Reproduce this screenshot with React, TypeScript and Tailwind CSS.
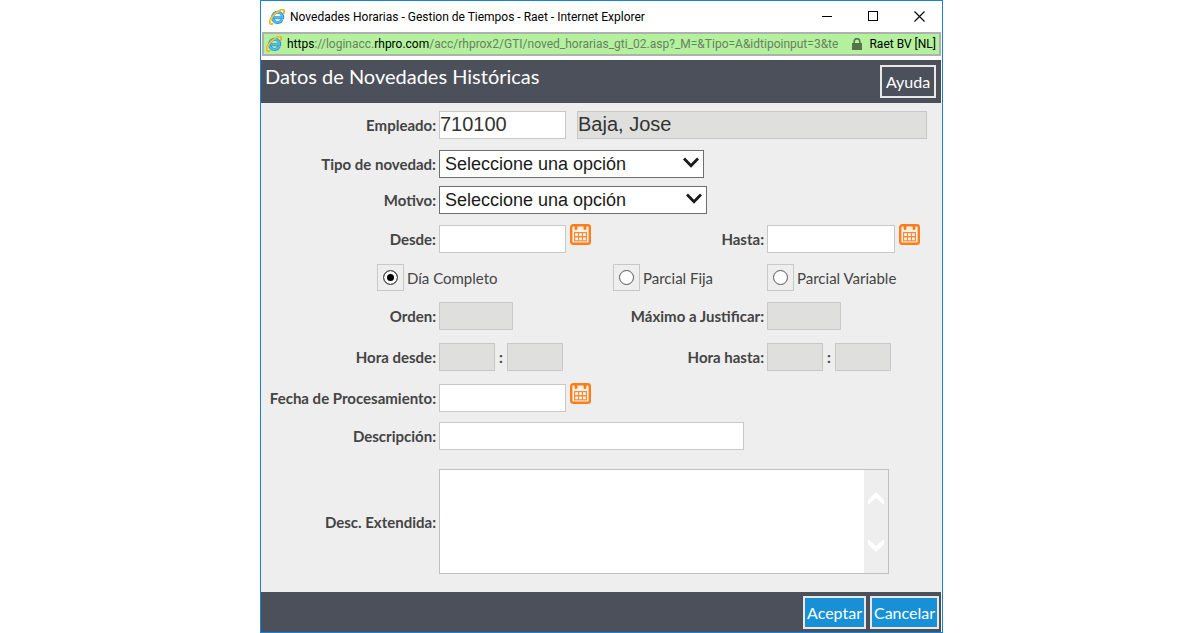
import { useState } from "react"
import type { ReactNode } from "react"
import clsx from "clsx"

const radioOptions = [
    { id: "completo", text: "Día Completo", cell: "col-span-2 pl-[116px]" },
    { id: "fija", text: "Parcial Fija", cell: "" },
    { id: "variable", text: "Parcial Variable", cell: "" },
]

function ExplorerIcon() {
    return (
        <svg viewBox="0 0 16 16" className="size-4 shrink-0" aria-hidden="true">
            <path d="M13.2 10.6 A5.1 5.1 0 1 1 13.7 8.8 H5.2" fill="none" stroke="#2b8fd2" strokeWidth="3" />
            <path d="M13 10.6 A5 5 0 1 1 13.5 8.6 H5.2" fill="none" stroke="#5cbdf0" strokeWidth="1.6" />
            <path
                d="M3.4 14.9 C-0.6 15.8 0 11 4.2 6.4 C8.2 2 13.4 -0.6 14.8 1.1 C15.5 2 15.2 3.2 14.8 4.2"
                fill="none"
                stroke="#e8ae1c"
                strokeWidth="1.8"
                strokeLinecap="round"
            />
            <path
                d="M2.4 14.6 C-0.2 14.4 1.2 10.2 4.6 6.4 C8.4 2.2 13.2 -0.2 14.4 1.4"
                fill="none"
                stroke="#fbd84e"
                strokeWidth="0.9"
            />
        </svg>
    )
}

function CalendarButton({ label }: { label: string }) {
    return (
        <button type="button" aria-label={label} className="ml-1 -mt-2.5 shrink-0">
            <svg viewBox="0 0 21 21" className="block size-[21px]">
                <rect x="1.2" y="1.2" width="18.6" height="18.6" rx="2" fill="#fff1e6" stroke="#ff7d1a" strokeWidth="2.4" />
                <path d="M5 1 H7 V5.4 H5 Z M14 1 H16 V5.4 H14 Z" fill="#ff7d1a" stroke="#ff7d1a" strokeWidth="0.8" />
                <path d="M4 8 H17 V17.4 H4 Z" fill="#ff8a33" />
                <path
                    d="M5.2 9.2 h2.8 v2.8 h-2.8 Z M9.1 9.2 h2.8 v2.8 h-2.8 Z M13 9.2 h2.8 v2.8 h-2.8 Z M5.2 13.4 h2.8 v2.8 h-2.8 Z M9.1 13.4 h2.8 v2.8 h-2.8 Z M13 13.4 h2.8 v2.8 h-2.8 Z"
                    fill="#fff8f2"
                />
            </svg>
        </button>
    )
}

function Row({ className, children }: { className?: string; children: ReactNode }) {
    return <div className={clsx("grid grid-cols-[178px_174px_154px_1fr] items-center", className)}>{children}</div>
}

function Label({ htmlFor, className, children }: { htmlFor: string; className?: string; children: ReactNode }) {
    return (
        <label htmlFor={htmlFor} className={clsx("pr-[3px] text-right text-[15px] leading-5 font-bold whitespace-nowrap", className)}>
            {children}
        </label>
    )
}

interface TextBoxProps {
    id: string
    className: string
    value?: string
    disabled?: boolean
    label?: string
}

function TextBox({ id, className, value, disabled, label }: TextBoxProps) {
    return (
        <input
            id={id}
            type="text"
            defaultValue={value}
            disabled={disabled}
            aria-label={label}
            className={clsx(
                "h-7 shrink-0 border border-[#c8c8c8] bg-white pb-0.5 font-['Liberation_Sans',sans-serif] text-xl leading-6 text-[#333] disabled:bg-[#dfdfde]",
                className,
            )}
        />
    )
}

function SelectBox({ id, className }: { id: string; className: string }) {
    return (
        <div className={clsx("relative", className)}>
            <select
                id={id}
                className="block h-7 w-full appearance-none border border-[#6e6e6e] bg-white px-[5px] font-['Liberation_Sans',sans-serif] text-lg leading-6 text-[#1a1a1a]"
            >
                <option>Seleccione una opción</option>
            </select>
            <svg viewBox="0 0 16 12" className="pointer-events-none absolute top-[7px] right-[5px] h-3 w-4" aria-hidden="true">
                <path d="M1 1.5 L8 8.7 L15 1.5" fill="none" stroke="#1a1a1a" strokeWidth="2.8" />
            </svg>
        </div>
    )
}

function TimeFields({ id, label }: { id: string; label: string }) {
    return (
        <div className="flex items-center">
            <TextBox id={id} className="w-14" disabled />
            <span className="w-3 text-center text-[15px] font-bold">:</span>
            <TextBox id={`${id}-min`} className="w-14" label={label} disabled />
        </div>
    )
}

function TitleBar() {
    return (
        <div className="flex h-[31px] items-center pl-2 font-['Roboto',sans-serif] text-xs text-black">
            <ExplorerIcon />
            <h1 className="ml-[5px] flex-1 truncate">Novedades Horarias - Gestion de Tiempos - Raet - Internet Explorer</h1>
            <button type="button" aria-label="Minimizar" className="flex w-[46px] justify-center">
                <svg viewBox="0 0 11 11" className="size-[11px]">
                    <path d="M0 5.5 H10" stroke="#000" />
                </svg>
            </button>
            <button type="button" aria-label="Maximizar" className="flex w-[46px] justify-center">
                <svg viewBox="0 0 11 11" className="size-[11px]">
                    <rect x="0.5" y="0.5" width="9" height="9" fill="none" stroke="#000" />
                </svg>
            </button>
            <button type="button" aria-label="Cerrar" className="flex w-[46px] justify-center">
                <svg viewBox="0 0 11 11" className="size-[11px]">
                    <path d="M0.5 0.5 L10.5 10.5 M10.5 0.5 L0.5 10.5" stroke="#000" strokeWidth="1.1" />
                </svg>
            </button>
        </div>
    )
}

function AddressBar() {
    return (
        <div className="mx-px mb-1 flex h-6 items-center border-2 border-[#b0b0b0] bg-[#b3f19d] pr-[3px] pl-0.5 font-['Roboto',sans-serif] text-xs text-black">
            <ExplorerIcon />
            <div className="ml-[5px] min-w-0 flex-1 overflow-hidden whitespace-nowrap text-[#6b7f66]">
                <span className="text-black">https</span>://loginacc.<span className="text-black">rhpro.com</span>
                /acc/rhprox2/GTI/noved_horarias_gti_02.asp?_M=&amp;Tipo=A&amp;idtipoinput=3&amp;te
            </div>
            <svg viewBox="0 0 10 12" className="ml-[10px] h-3 w-[10px] shrink-0" aria-hidden="true">
                <path d="M2.2 6 V3.4 A2.8 2.8 0 0 1 7.8 3.4 V6" fill="none" stroke="#56734c" strokeWidth="1.6" />
                <rect y="5" width="10" height="7" fill="#56734c" />
            </svg>
            <span className="ml-[7px] shrink-0">Raet BV [NL]</span>
        </div>
    )
}

export default function App() {
    const [mode, setMode] = useState("completo")

    return (
        <div className="min-h-screen bg-white pl-[3px] font-['Lato',sans-serif] text-[#444]">
            <main className="mx-auto w-full max-w-[683px] border border-[#1883d7] bg-white">
                <TitleBar />
                <AddressBar />

                <header className="mr-px flex h-[43px] items-center justify-between bg-[#4c505b] pr-[5px] pl-1 text-white">
                    <h2 className="pb-3 text-xl leading-6">Datos de Novedades Históricas</h2>
                    <button type="button" className="h-[33px] w-14 border-2 border-[#e8e8e8] text-base">
                        Ayuda
                    </button>
                </header>

                <form onSubmit={(e) => e.preventDefault()}>
                    <div className="bg-[#eee] pt-2 pb-[18px]">
                        <Row className="mb-[11px]">
                            <Label htmlFor="empleado">Empleado:</Label>
                            <div className="col-span-3 flex gap-[11px]">
                                <TextBox id="empleado" className="w-[127px]" value="710100" />
                                <TextBox id="nombre" className="w-[350px]" value="Baja, Jose" label="Nombre" disabled />
                            </div>
                        </Row>
                        <Row className="mb-2">
                            <Label htmlFor="tipo">Tipo de novedad:</Label>
                            <SelectBox id="tipo" className="col-span-3 w-[265px]" />
                        </Row>
                        <Row className="mb-[11px]">
                            <Label htmlFor="motivo">Motivo:</Label>
                            <SelectBox id="motivo" className="col-span-3 w-[268px]" />
                        </Row>
                        <Row className="mb-[11px]">
                            <Label htmlFor="desde">Desde:</Label>
                            <div className="flex items-center">
                                <TextBox id="desde" className="w-[127px]" />
                                <CalendarButton label="Elegir fecha desde" />
                            </div>
                            <Label htmlFor="hasta">Hasta:</Label>
                            <div className="flex items-center">
                                <TextBox id="hasta" className="w-32" />
                                <CalendarButton label="Elegir fecha hasta" />
                            </div>
                        </Row>
                        <Row className="mb-[11px]">
                            {radioOptions.map((o) => (
                                <div key={o.id} className={clsx("flex items-center", o.cell)}>
                                    <span className="flex size-[27px] items-center justify-center border border-[#c8c8c8]">
                                        <input
                                            id={o.id}
                                            type="radio"
                                            name="modo"
                                            checked={mode === o.id}
                                            onChange={() => setMode(o.id)}
                                            className="size-[15px] appearance-none rounded-full border border-[#555] bg-white checked:bg-black checked:shadow-[inset_0_0_0_3px_#fff]"
                                        />
                                    </span>
                                    <label htmlFor={o.id} className="pl-[3px] text-[15px] leading-5 whitespace-nowrap">
                                        {o.text}
                                    </label>
                                </div>
                            ))}
                        </Row>
                        <Row className="mb-[13px]">
                            <Label htmlFor="orden">Orden:</Label>
                            <TextBox id="orden" className="w-[74px]" disabled />
                            <Label htmlFor="maximo">Máximo a Justificar:</Label>
                            <TextBox id="maximo" className="w-[74px]" disabled />
                        </Row>
                        <Row className="mb-[13px]">
                            <Label htmlFor="hora-desde">Hora desde:</Label>
                            <TimeFields id="hora-desde" label="Minutos desde" />
                            <Label htmlFor="hora-hasta">Hora hasta:</Label>
                            <TimeFields id="hora-hasta" label="Minutos hasta" />
                        </Row>
                        <Row className="mb-[10px]">
                            <Label htmlFor="fecha">Fecha de Procesamiento:</Label>
                            <div className="flex items-center">
                                <TextBox id="fecha" className="w-[127px]" />
                                <CalendarButton label="Elegir fecha de procesamiento" />
                            </div>
                        </Row>
                        <Row className="mb-[19px]">
                            <Label htmlFor="descripcion">Descripción:</Label>
                            <TextBox id="descripcion" className="col-span-3 w-[305px]" />
                        </Row>
                        <Row>
                            <Label htmlFor="extendida">Desc. Extendida:</Label>
                            <div className="col-span-3 flex h-[105px] w-[450px] border border-[#c0c0c0] bg-white">
                                <textarea id="extendida" className="flex-1 resize-none p-1 text-base" />
                                <div className="flex w-6 flex-col items-center justify-center gap-8 bg-[#eee]">
                                    <svg viewBox="0 0 16 14" className="h-[14px] w-4" aria-hidden="true">
                                        <path d="M0 13 V8 L8 0 L16 8 V13 L8 6 Z" fill="#fff" />
                                    </svg>
                                    <svg viewBox="0 0 16 14" className="h-[14px] w-4" aria-hidden="true">
                                        <path d="M0 1 V6 L8 14 L16 6 V1 L8 8 Z" fill="#fff" />
                                    </svg>
                                </div>
                            </div>
                        </Row>
                    </div>

                    <footer className="mr-px flex h-10 items-start justify-end gap-1 bg-[#4c505b] pt-1 pr-0.5 text-base text-white">
                        <button type="submit" className="flex h-[33px] w-[63px] items-center justify-center border-2 border-[#e8e8e8] bg-[#1790d6]">
                            Aceptar
                        </button>
                        <button type="button" className="flex h-[33px] w-[69px] items-center justify-center border-2 border-[#e8e8e8] bg-[#1790d6]">
                            Cancelar
                        </button>
                    </footer>
                </form>
            </main>
        </div>
    )
}
